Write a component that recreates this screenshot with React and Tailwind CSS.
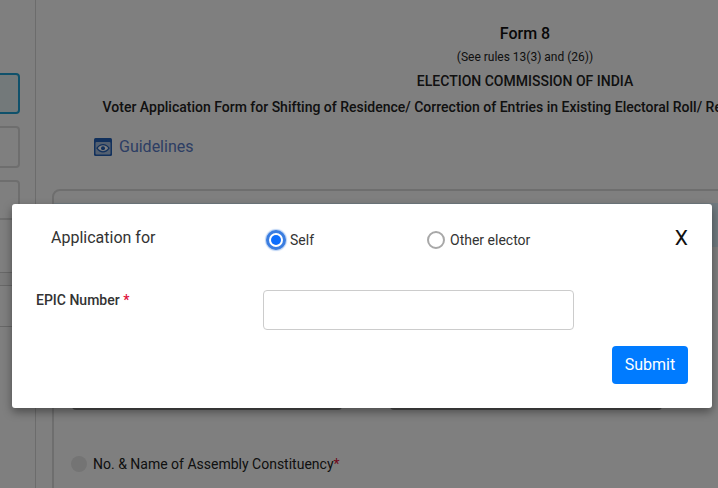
function Radio({ checked, label }) {
  return (
    <label className="flex items-center gap-[4px] text-sm text-[#333]">
      {checked ? (
        <span className="flex h-[20px] w-[20px] items-center justify-center rounded-full border-[3px] border-[#3a7de0] bg-white shadow-[0_0_1px_1px_rgba(58,125,224,0.35)]">
          <span className="h-[10px] w-[10px] rounded-full bg-[#0d6efd]" />
        </span>
      ) : (
        <span className="mr-[1px] h-[18px] w-[18px] rounded-full border-2 border-[#a8a8a8] bg-white" />
      )}
      {label}
    </label>
  );
}

function SideCard({ active, className }) {
  return (
    <div className={`-ml-[20px] w-[40px] rounded-[4px] border-2 ${active ? 'border-[#1fa3d6] bg-[#e6f3f5]' : 'border-[#dcdcdc]'} ${className}`} />
  );
}

export default function App() {
  return (
    <div className="relative h-[488px] w-[718px] overflow-hidden bg-white font-['Roboto',sans-serif]">
      {/* Page behind the dialog */}
      <div className="flex h-full">
        <aside className="flex w-[36px] shrink-0 flex-col border-r border-[#d8d8d8] pt-[73px]">
          <SideCard active className="h-[41px]" />
          <SideCard className="mt-[12px] h-[42px]" />
          <SideCard className="mt-[12px] h-[40px]" />
          <div className="mt-[52px] h-[14px] border-y border-[#d0d0d0] bg-[#f6f6f6]" />
          <div className="mt-[40px] border-t border-[#d0d0d0]" />
        </aside>
        <main className="w-[978px] shrink-0 text-center text-[#111]">
          <h1 className="mt-[24px] text-base leading-[20px] font-medium">Form 8</h1>
          <p className="mt-[6px] text-xs leading-[14px] text-[#222]">(See rules 13(3) and (26))</p>
          <p className="mt-[9px] text-sm leading-[16px] font-medium text-[#222]">ELECTION COMMISSION OF INDIA</p>
          <p className="mt-[8px] pl-[2px] text-sm leading-[20px] font-medium whitespace-nowrap text-[#222]">
            Voter Application Form for Shifting of Residence/ Correction of Entries in Existing Electoral Roll/ Replacement of EPIC/ Marking of PwD.
          </p>
          <div className="mt-[20px] ml-[58px] flex items-center gap-[7px] text-left">
            <svg width="18" height="18" viewBox="0 0 18 18" aria-hidden="true">
              <rect width="18" height="18" rx="1.5" fill="#2360b8" />
              <rect x="1.5" y="4" width="15" height="12.5" rx="1" fill="#a8c0e0" />
              <path d="M3 10.2C4.6 7.8 6.7 6.6 9 6.6s4.4 1.2 6 3.6c-1.6 2.4-3.7 3.6-6 3.6s-4.4-1.2-6-3.6Z" fill="#fff" stroke="#2360b8" strokeWidth="1.3" />
              <circle cx="9" cy="10.2" r="2" fill="#2360b8" />
            </svg>
            <span className="text-base leading-[20px] text-[#5a7cc8]">Guidelines</span>
          </div>
          <section className="mt-[32px] ml-[16px] h-[400px] rounded-lg border-2 border-[#dcdcdc] pt-[12px] text-left">
            <div className="h-[44px] bg-[#e0f4ff]" />
            <div className="mt-[122px] ml-[18px] flex gap-[48px]">
              <div className="h-[41px] w-[270px] rounded-[4px] border-b-[3px] border-[#999]" />
              <div className="h-[41px] w-[272px] rounded-[4px] border-b-[3px] border-[#999]" />
            </div>
            <div className="mt-[44px] ml-[17px] flex items-center gap-[6px] text-sm leading-[20px] text-[#222]">
              <span className="h-[16px] w-[16px] rounded-full bg-[#e8e8e8]" />
              <span>
                No. &amp; Name of Assembly Constituency<span className="text-[#e0103a]">*</span>
              </span>
            </div>
          </section>
        </main>
      </div>

      <div className="absolute inset-0 bg-black/50" />

      {/* Dialog */}
      <div className="absolute top-[204px] left-[12px] h-[204px] w-[700px] rounded-[3px] bg-white pt-[21px] shadow-[0_4px_10px_rgba(0,0,0,0.4)]">
        <div className="flex h-[26px] items-center">
          <span className="ml-[39px] w-[215px] text-base text-[#333]">Application for</span>
          <div className="mt-[4px] w-[161px]">
            <Radio checked label="Self" />
          </div>
          <div className="mt-[4px]">
            <Radio label="Other elector" />
          </div>
          <button className="mr-[24px] ml-auto text-[21px] leading-none text-[#111]">X</button>
        </div>
        <div className="mt-[39px] flex">
          <label className="ml-[24px] w-[227px] pt-[2px] text-sm leading-[16px] font-medium text-[#333]">
            EPIC Number <span className="text-[#e0103a]">*</span>
          </label>
          <input className="h-[40px] w-[311px] rounded-[4px] border border-[#ccc] bg-white" />
        </div>
        <div className="mt-[16px] flex justify-end pr-[24px]">
          <button className="h-[38px] w-[76px] rounded-[4px] bg-[#007bff] text-base text-white">Submit</button>
        </div>
      </div>
    </div>
  );
}
